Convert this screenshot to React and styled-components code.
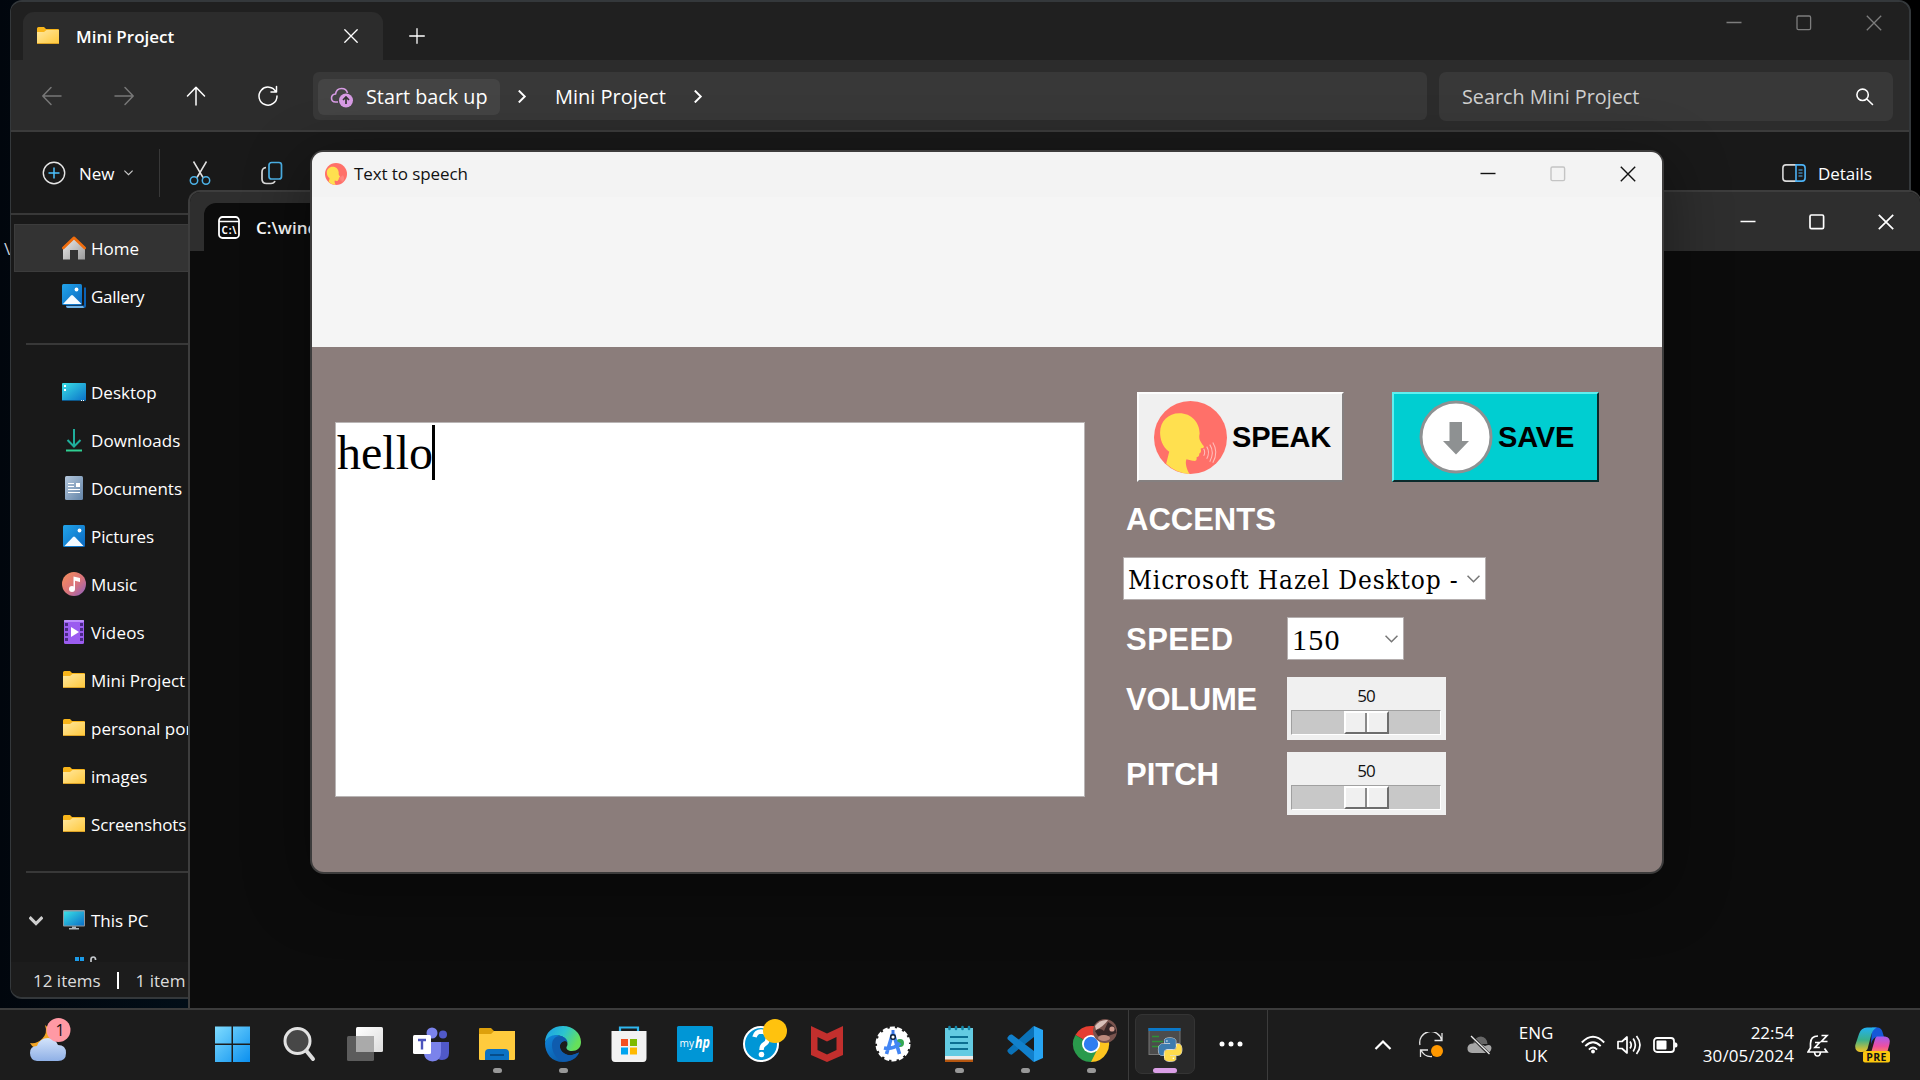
import React from "react";
import styled, { createGlobalStyle, css } from "styled-components";

const GlobalStyle = createGlobalStyle`
  *, *::before, *::after { box-sizing: border-box; }
  html, body { margin: 0; padding: 0; background: #000; }
  body { overflow: hidden; font-family: "Open Sans", "Noto Sans", sans-serif; font-size: 17px; line-height: 1; color: #fff; }
  svg { display: block; flex: none; }
`;

const Desktop = styled.main`
  position: relative;
  width: 1920px;
  height: 1080px;
  overflow: hidden;
  background: linear-gradient(90deg, #01060d 0, #020e18 190px, #000 600px);
`;

const DesktopLabel = styled.span`
  position: absolute;
  left: 4px;
  top: 240px;
  color: #c9d4e0;
`;

const Window = styled.section`
  position: absolute;
  display: flex;
  flex-direction: column;
  overflow: hidden;
  left: ${(p) => p.$x}px;
  top: ${(p) => p.$y}px;
  width: ${(p) => p.$w}px;
  height: ${(p) => p.$h}px;
`;

const Text = styled.span`
  white-space: nowrap;
  font-size: ${(p) => p.$size || 17}px;
  font-weight: ${(p) => p.$weight || 400};
  letter-spacing: ${(p) => p.$track || 0}px;
  color: ${(p) => p.$color || "inherit"};
`;

/* ---------- window controls ---------- */
const Controls = styled.div`
  display: flex;
  align-items: center;
  margin-left: auto;
  gap: ${(p) => p.$gap}px;
  padding-right: ${(p) => p.$right}px;
  color: ${(p) => p.$color};
`;

const WindowControls = ({ color, maxColor, gap, right, w = 1.4 }) => (
  <Controls $color={color} $gap={gap} $right={right}>
    <svg width="16" height="16" viewBox="0 0 16 16"><path d="M.5 7.5h15" stroke="currentColor" strokeWidth={w} /></svg>
    <svg width="16" height="16" viewBox="0 0 16 16"><rect x="1" y="1" width="13.6" height="13.6" rx="1.4" fill="none" stroke={maxColor || "currentColor"} strokeWidth={w} /></svg>
    <svg width="16" height="16" viewBox="0 0 16 16"><path d="M.8.8l14.4 14.4M15.2.8L.8 15.2" stroke="currentColor" strokeWidth={w} /></svg>
  </Controls>
);

/* ---------- file explorer ---------- */
const ExplorerWindow = styled(Window)`
  background: #191919;
  border: 2px solid #34383b;
  border-left-width: 1px;
  border-radius: 12px;
`;

const TabStrip = styled.header`
  display: flex;
  height: 58px;
  padding: 10px 0 0 12px;
  background: #202020;
`;

const ExplorerTab = styled.div`
  display: flex;
  align-items: center;
  width: 360px;
  height: 48px;
  padding: 0 25px 0 13px;
  background: #2c2c2c;
  border-radius: 11px 11px 0 0;
  svg:last-child { margin-left: auto; }
  span { margin-left: 16px; }
`;

const NewTab = styled.div`
  display: grid;
  place-items: center;
  width: 68px;
  height: 48px;
`;

const StripControls = styled.div`
  display: flex;
  margin: -10px 0 0 auto;
  height: 42px;
`;

const NavBar = styled.nav`
  display: flex;
  align-items: center;
  height: 72px;
  padding: 2px 16px 0 29px;
  background: #2c2c2c;
  border-bottom: 2px solid #3b3b3b;
`;

const NavIcons = styled.div`
  display: flex;
  gap: 48px;
  width: 273px;
`;

const Address = styled.div`
  display: flex;
  align-items: center;
  width: 1114px;
  height: 48px;
  padding: 1px 5px 0;
  border-radius: 6px;
  background: #383838;
  > svg { margin: 0 15px 0 15px; }
`;

const BackupChip = styled.div`
  display: flex;
  align-items: center;
  gap: 12px;
  width: 182px;
  height: 36px;
  padding: 1px 12px 0;
  border-radius: 6px;
  background: #444;
`;

const Crumb = styled.div`
  width: 121px;
  margin-left: 12px;
  padding-top: 1px;
`;

const SearchBox = styled.div`
  display: flex;
  align-items: center;
  justify-content: space-between;
  width: 454px;
  height: 49px;
  margin-left: 12px;
  padding: 1px 19px 0 23px;
  border-radius: 7px;
  background: #383838;
  color: #cfcfcf;
`;

const CommandBar = styled.div`
  display: flex;
  align-items: center;
  height: 83px;
  padding: 0 37px 0 31px;
  border-bottom: 2px solid #383838;
  span { padding-top: 2px; }
`;

const NewButton = styled.div`
  display: flex;
  align-items: center;
  width: 118px;
  height: 48px;
  gap: 13px;
  border-right: 1px solid #383838;
  svg:last-child { margin-left: -4px; }
`;

const CommandIcons = styled.div`
  display: flex;
  gap: 48px;
  margin-left: 28px;
`;

const DetailsButton = styled.div`
  display: flex;
  align-items: center;
  gap: 12px;
  margin-left: auto;
`;

const SideBar = styled.aside`
  width: 260px;
  height: 747px;
  padding: 9px 0 0 3px;
  overflow: hidden;
`;

const SideItem = styled.div`
  display: flex;
  align-items: center;
  height: 48px;
  padding-left: 12px;
  ${(p) => p.$active && css`
    background: #333;
    border: 1px solid #3c3c3c;
    padding-left: 11px;
  `}
`;

const Expander = styled.div`
  width: 21px;
  margin-right: 15px;
  padding-left: 3px;
`;

const SideIcon = styled.div`
  display: grid;
  place-items: center;
  width: 24px;
  height: 24px;
  margin-right: 5px;
  margin-left: ${(p) => (p.$nested ? 12 : 0)}px;
`;

const SideDivider = styled.div`
  height: 48px;
  margin-left: 12px;
  &::before { content: ""; display: block; height: 25px; border-bottom: 2px solid #383838; }
`;

const StatusBar = styled.footer`
  display: flex;
  align-items: center;
  height: 35px;
  padding: 2px 0 0 22px;
  background: #1c1c1c;
  color: #dcdcdc;
`;

const StatusMark = styled.i`
  width: 2px;
  height: 17px;
  margin: 0 17px 0 16px;
  background: #fff;
`;

/* ---------- terminal ---------- */
const TerminalWindow = styled(Window)`
  background: #0c0c0c;
  border: 2px solid #3d3d3d;
  border-right-width: 1px;
  border-bottom: 0;
  border-radius: 12px 12px 0 0;
`;

const TerminalBar = styled.header`
  display: flex;
  height: 59px;
  padding-left: 14px;
  background: #2e2e2e;
`;

const TerminalTab = styled.div`
  display: flex;
  align-items: center;
  gap: 16px;
  width: 360px;
  height: 48px;
  margin-top: 11px;
  padding-left: 14px;
  background: #0c0c0c;
  border-radius: 12px 12px 0 0;
`;

/* ---------- text to speech ---------- */
const SpeechWindow = styled(Window)`
  overflow: visible;
  border-radius: 12px;
  background: #8b7d7b;
  box-shadow: 0 0 0 2px #3d3c3c, 0 16px 60px 10px rgba(0, 0, 0, 0.32);
`;

const SpeechTitle = styled.header`
  display: flex;
  align-items: center;
  height: 45px;
  padding: 0 0 2px 13px;
  gap: 7px;
  color: #111;
  background: #f3f3f3;
  border-radius: 11px 11px 0 0;
`;

const TopFrame = styled.div`
  height: 150px;
  background: #f5f5f5;
`;

const SpeechBody = styled.div`
  display: flex;
  flex: 1;
  padding-left: 23px;
`;

const TextArea = styled.div`
  display: flex;
  align-items: flex-start;
  width: 750px;
  height: 375px;
  margin: 75px 38px 0 0;
  padding: 2px 1px;
  border: 1px solid #b9b5b5;
  background: #fff;
  color: #000;
  font: 48px/55px "Liberation Serif", serif;
`;

const Caret = styled.i`
  width: 3px;
  height: 55px;
  margin-left: -1px;
  background: #000;
`;

const Controller = styled.div`
  display: flex;
  flex-direction: column;
  padding-top: 45px;
`;

const ButtonRow = styled.div`
  display: flex;
  gap: 48px;
  padding-left: 14px;
`;

const TkButton = styled.div`
  display: flex;
  align-items: center;
  gap: 5px;
  width: 207px;
  height: 90px;
  padding-left: ${(p) => p.$left}px;
  color: #000;
  font: 700 29px/1 "Liberation Sans", sans-serif;
  letter-spacing: -0.2px;
  background: ${(p) => p.$bg};
  border: 2px solid;
  border-color: ${(p) => p.$edge};
`;

const FieldLabel = styled.div`
  width: 164px;
  padding-left: 3px;
  color: #fff;
  font: 700 31px/${(p) => p.$line || 45}px "Liberation Sans", sans-serif;
  letter-spacing: ${(p) => p.$track || 0}px;
`;

const Field = styled.div`
  display: flex;
  align-items: flex-start;
  height: ${(p) => p.$h}px;
  margin-top: ${(p) => p.$gap}px;
`;

const Combo = styled.div`
  display: flex;
  align-items: center;
  justify-content: space-between;
  width: ${(p) => p.$w}px;
  height: 43px;
  padding: 0 5px 0 4px;
  border: 1px solid #b4aeae;
  background: #fff;
  color: #000;
`;

const ComboText = styled.span`
  padding-top: 2px;
  white-space: nowrap;
  font: ${(p) => p.$font};
  letter-spacing: ${(p) => p.$track}px;
`;

const Scale = styled.div`
  width: 159px;
  height: 63px;
  padding: 10px 5px 0 4px;
  background: #f0f0f0;
  color: #111;
  text-align: center;
  font-size: 17px;
  letter-spacing: -1px;
`;

const Trough = styled.div`
  display: flex;
  justify-content: center;
  height: 25px;
  margin-top: 6px;
  border: 1px solid;
  border-color: #a0a0a0 #fff #fff #a0a0a0;
  background: #c8c8c8;
`;

const Thumb = styled.div`
  display: flex;
  width: 45px;
  height: 23px;
  border: 2px solid;
  border-color: #fff #6d6d6d #6d6d6d #fff;
  background: #f0f0f0;
  &::before { content: ""; width: 21px; border-right: 2px solid #8a8a8a; }
  &::after { content: ""; width: 2px; background: #fff; }
`;

/* ---------- taskbar ---------- */
const TaskBar = styled.footer`
  position: absolute;
  left: 0;
  right: 0;
  bottom: 0;
  display: flex;
  height: 72px;
  background: #1c1c1c;
  border-top: 2px solid #3c3c3c;
`;

const Widgets = styled.div`
  width: 200px;
  padding: 8px 0 0 28px;
`;

const TaskCell = styled.div`
  display: flex;
  flex-direction: column;
  align-items: center;
  width: 66px;
  padding-top: 7px;
  svg { overflow: visible; }
`;

const RunMark = styled.i`
  width: 9px;
  height: 5px;
  margin-top: 3px;
  border-radius: 3px;
  background: #989898;
`;

const ActiveGroup = styled.div`
  display: flex;
  width: 140px;
  margin-left: 4px;
  padding: 4px 0 0 6px;
  border: solid #3c3c3c;
  border-width: 0 1px;
`;

const ActiveTask = styled.div`
  display: flex;
  flex-direction: column;
  align-items: center;
  width: 60px;
  height: 60px;
  border: 1px solid #343434;
  border-radius: 7px;
  background: #292929;
  i { width: 24px; height: 5px; margin-top: 5px; border-radius: 3px; background: #da9fe6; }
`;

const Overflow = styled.div`
  display: grid;
  place-items: center;
  width: 72px;
  height: 60px;
`;

const Tray = styled.div`
  display: flex;
  align-items: center;
  margin-left: 106px;
`;

const Slot = styled.div`
  margin-left: ${(p) => p.$gap || 0}px;
`;

const TwoLines = styled.div`
  display: flex;
  flex-direction: column;
  align-items: ${(p) => p.$align};
  width: ${(p) => p.$w}px;
  gap: 6px;
  padding-bottom: 2px;
  margin-left: ${(p) => p.$gap}px;
`;

/* ---------- icon drawings ---------- */
const Folder = ({ size = 24 }) => (
  <svg width={size} height={size} viewBox="0 0 24 24">
    <defs><linearGradient id="fold" x1="0" y1="0" x2="1" y2="1"><stop offset="0" stopColor="#ffe8a0" /><stop offset="1" stopColor="#ffc83a" /></linearGradient></defs>
    <path d="M1 4.5Q1 3 2.500 3H8L10 5H22Q23 5 23 6V19H1Z" fill="#f8b51a" />
    <path d="M1 8H8L10.500 6H23V19.500Q23 20 22 20H2Q1 20 1 19Z" fill="url(#fold)" />
    <path d="M1 19.500H23" stroke="#dda327" />
  </svg>
);

const Chevron = ({ dir = "right", size = 12, w = 1.8, color = "currentColor" }) => {
  const turn = { right: 0, down: 90, left: 180, up: -90 }[dir];
  return (
    <svg width={size} height={size} viewBox="0 0 12 12">
      <path d="M3.500 0.500L9 6L3.500 11.500" transform={`rotate(${turn} 6 6)`} fill="none" stroke={color} strokeWidth={w} />
    </svg>
  );
};

const Line = ({ d, size = 24, w = 1.7, color = "#fff", box = 24 }) => (
  <svg width={size} height={size} viewBox={`0 0 ${box} ${box}`} fill="none" stroke={color} strokeWidth={w} strokeLinecap="round" strokeLinejoin="round"><path d={d} /></svg>
);

const Picture = ({ stacked }) => (
  <svg width="24" height="24" viewBox="0 0 24 24">
    <defs><linearGradient id="pic" x1="0" y1="0" x2="1" y2="1"><stop stopColor="#22a4ea" /><stop offset="1" stopColor="#0a68c0" /></linearGradient></defs>
    {stacked && <path d="M4 21.500h18v-18h2V22q0 2-2 2H5z" fill="#0b62b5" />}
    {stacked && <path d="M4 22H21L22 24H6Q4 24 4 22Z" fill="#6fb3e8" />}
    <rect x={stacked ? 0 : 1} y={stacked ? 0 : 1} width={stacked ? 20 : 22} height={stacked ? 21 : 22} rx="1.500" fill="url(#pic)" />
    <path d={stacked ? "M1 20L9 11.500Q10 10.500 11 11.500L19.500 20Z" : "M2.500 22L11 13Q12 12 13 13L21.500 22Z"} fill="#f4faff" />
    <circle cx={stacked ? 14.500 : 17.500} cy={stacked ? 5.500 : 6.500} r="1.900" fill="#fff" />
  </svg>
);

const Home = () => (
  <svg width="24" height="24" viewBox="0 0 24 24">
    <defs><linearGradient id="hm" x1="0" y1="0" x2="1" y2="1"><stop stopColor="#eee" /><stop offset="1" stopColor="#9a9a9a" /></linearGradient></defs>
    <path d="M1 11L12 1.500L23 11V23.500H16V14H8V23.500H1Z" fill="url(#hm)" />
    <path d="M1.300 12L12 1.800L22.700 12" fill="none" stroke="#ef6c0c" strokeWidth="2.600" strokeLinecap="round" strokeLinejoin="round" />
  </svg>
);

const DesktopIcon = () => (
  <svg width="24" height="24" viewBox="0 0 24 24">
    <defs><linearGradient id="dk" x1="0" y1="0" x2="1" y2="1"><stop stopColor="#3ae0e6" /><stop offset="1" stopColor="#0a6fc8" /></linearGradient></defs>
    <rect y="3" width="24" height="18" rx="1" fill="url(#dk)" /><path d="M0 20.500h24" stroke="#0c5688" />
    <path d="M2 5h2v2H2zM2 9h2v2H2zM19 20h1v1h-1zM21 20h1v1h-1z" fill="#fff" />
  </svg>
);

const Downloads = () => (
  <svg width="24" height="24" viewBox="0 0 24 24" fill="none" strokeWidth="2">
    <path d="M12 1V18.500M5.500 12L12 18.500L18.500 12" stroke="#1fae9c" /><path d="M4 22.500H20" stroke="#2fcf92" />
  </svg>
);

const Documents = () => (
  <svg width="24" height="24" viewBox="0 0 24 24">
    <defs><linearGradient id="dc" x1="0" y1="0" x2="1" y2="1"><stop stopColor="#b4c7dc" /><stop offset="1" stopColor="#6384a8" /></linearGradient></defs>
    <rect x="3" width="18" height="24" rx="1.500" fill="url(#dc)" />
    <path d="M6 7.500h6M6 10.500h6M6 13.500h12M6 16.500h12" stroke="#fff" strokeWidth="1" /><path d="M14 7h4v4h-4z" fill="#fff" />
  </svg>
);

const Music = () => (
  <svg width="24" height="24" viewBox="0 0 24 24">
    <defs><linearGradient id="mu" x1="0" y1="0" x2="1" y2="1"><stop stopColor="#f8905a" /><stop offset=".55" stopColor="#d8737c" /><stop offset="1" stopColor="#8a5fc4" /></linearGradient></defs>
    <circle cx="12" cy="12" r="12" fill="url(#mu)" /><circle cx="10" cy="17" r="3" fill="#fff" /><path d="M11.500 17V4.500L18 6V10L13 8.700V17Z" fill="#fff" />
  </svg>
);

const Videos = () => (
  <svg width="24" height="24" viewBox="0 0 24 24">
    <rect x="2" width="20" height="24" rx="1.500" fill="#9b5cf0" /><path d="M2 1h20" stroke="#c9a2ff" strokeWidth="1.500" />
    <path d="M3 3h3v3H3zM3 8h3v3H3zM3 13h3v3H3zM3 18h3v3H3zM18 3h3v3h-3zM18 8h3v3h-3zM18 13h3v3h-3zM18 18h3v3h-3z" fill="#4b2a86" />
    <path d="M9 7L17 12L9 17Z" fill="#fff" />
  </svg>
);

const Computer = () => (
  <svg width="24" height="24" viewBox="0 0 24 24">
    <rect x="1" y="2" width="22" height="16.500" rx="1" fill="#8d979f" /><rect x="2" y="3.500" width="20" height="14" fill="url(#dk)" />
    <path d="M10 18.500h4v1.500h3V21.500H7V20h3z" fill="#aeb6bc" />
  </svg>
);

const SystemDrive = () => (
  <svg width="24" height="24" viewBox="0 0 24 24">
    <path d="M1 1h4v4H1zM6 1h4v4H6zM1 6h4v4H1zM6 6h4v4H6z" fill="#1b9be8" />
    <path d="M17 10V3.500Q17 1 19.300 1Q21.600 1 21.600 4" fill="none" stroke="#c4c8cc" strokeWidth="1.700" />
    <rect x="0" y="12" width="24" height="8" rx="1" fill="#b8bcc0" />
  </svg>
);

const SpeakHead = ({ size }) => (
  <svg width={size} height={size} viewBox="0 0 72 72">
    <circle cx="36" cy="36" r="36" fill="#ff7069" />
    <path d="M12 62L15 50C8 45 6 37 6 31C6 20 14 12 25 12C37 12 45 21 45 32C44 37 45 39 49 44.500C50 46.500 48 46.500 46 47C47 50 46 51 44.500 52C45 54 44 55 42 55.500C42.500 59 41 59.500 38 59L32 57.500C30.500 61 32 67 35 72A36 36 0 0 1 12 62Z" fill="#ffe04f" />
    <path d="M49 47Q51 50.500 49 54M52 45Q55.500 50.500 52 57M55 43Q60 50.500 55 60M58 41Q64 50.500 58 61" fill="none" stroke="#ffc0bd" strokeWidth="1" />
  </svg>
);

const SaveArrow = () => (
  <svg width="74" height="74" viewBox="0 0 74 74">
    <circle cx="37" cy="37" r="35" fill="#fff" stroke="#8e9192" strokeWidth="3" />
    <path d="M30.500 22H43V41H50L37 54.500L24 41H30.500Z" fill="#8e9192" />
  </svg>
);

const Weather = () => (
  <svg width="46" height="46" viewBox="0 0 46 46">
    <defs><linearGradient id="cl" x1="0" y1="0" x2="0" y2="1"><stop stopColor="#d4e4fb" /><stop offset="1" stopColor="#8fb0e6" /></linearGradient></defs>
    <path d="M17 7Q20 15 14 21Q9 26 2 25Q5 31 13 31Q22 30 24 20Q23 11 17 7Z" fill="#f3a625" />
    <path d="M9 43Q2 42 2 35Q2 28 9 28Q12 20 20 20Q27 20 30 27Q38 27 38 35Q38 43 30 43Z" fill="url(#cl)" />
    <circle cx="30.500" cy="12" r="12" fill="#ff99a4" />
    <text x="32" y="18" textAnchor="middle" fontSize="16" fill="#111">1</text>
  </svg>
);

const Cell = ({ children, open }) => (
  <TaskCell>
    <svg width="48" height="48" viewBox="0 0 48 48">{children}</svg>
    {open && <RunMark />}
  </TaskCell>
);

const TaskIcons = () => (
  <>
    <Cell>
      <defs><linearGradient id="wn" x1="0" y1="0" x2="1" y2="1"><stop stopColor="#7fdcff" /><stop offset="1" stopColor="#0a8fef" /></linearGradient></defs>
      <path d="M8 10h16.500v17H8zM26 10H43v17H26zM8 28.500h16.500v17H8zM26 28.500H43v17H26z" transform="translate(-2 -.5)" fill="url(#wn)" />
    </Cell>
    <Cell>
      <circle cx="22.500" cy="24" r="12.500" fill="#474747" stroke="#e2e2e2" strokeWidth="3" />
      <path d="M31.500 34L38 42" stroke="#dcdcdc" strokeWidth="4" strokeLinecap="round" />
    </Cell>
    <Cell>
      <defs><linearGradient id="tv" x1="0" y1="0" x2="1" y2="1"><stop stopColor="#fff" /><stop offset="1" stopColor="#dcdcdc" /></linearGradient></defs>
      <rect x="15" y="10" width="27" height="25" rx="1.500" fill="url(#tv)" />
      <rect x="6" y="19" width="27" height="25" rx="1.500" fill="#5c5c5c" /><path d="M15 19H33V35H15Z" fill="#aaa" />
    </Cell>
    <Cell>
      <circle cx="25" cy="16" r="5.500" fill="#7b83eb" /><circle cx="36" cy="17.500" r="4" fill="#5059c9" />
      <path d="M32 25H42V36Q42 43 35 43Q30 43 29 38Z" fill="#5059c9" /><path d="M17 25H34V35Q34 44 25.500 44.500Q18 44 17 37Z" fill="#7b83eb" />
      <rect x="6" y="18" width="18" height="19" rx="1.500" fill="#fff" /><path d="M11 23H19M15 23V32.500" stroke="#4b53bc" strokeWidth="2.400" />
    </Cell>
    <Cell open>
      <path d="M6 12Q6 11 7 11H18L21 14H41Q42 14 42 15V42H6Z" fill="#dda00c" />
      <path d="M6 17H18L21 14H42V42Q42 43 41 43H7Q6 43 6 42Z" fill="#ffcb3d" />
      <path d="M12 43V36Q12 32 16 32H32Q36 32 36 36V43Z" fill="#0c72c4" /><path d="M17 38H31" stroke="#06457c" strokeWidth="1.600" />
    </Cell>
    <Cell open>
      <defs>
        <linearGradient id="eg" x1="0" y1="0" x2="1" y2=".4"><stop stopColor="#1a9be8" /><stop offset=".55" stopColor="#2cc4cf" /><stop offset="1" stopColor="#66e05a" /></linearGradient>
        <linearGradient id="eb" x1="0" y1="0" x2="1" y2="1"><stop stopColor="#0f86dc" /><stop offset="1" stopColor="#0b4a94" /></linearGradient>
      </defs>
      <path d="M6 26C6 15 14 9 24 9C34 9 42 16 42 25C42 31 38 34 33 34C29 34 27 32 27.500 30C30 27 28 20 20 18.500C12 18 7 22 6 26Z" fill="url(#eg)" />
      <path d="M6 26C8 20 14 17 20 18.500C25 19.500 28 22 28.500 25C27 23 22 24 21 28C20 34 26 39 33 38C36 37.500 39 36 40 35.500C38 41 32 45 24 45C13 45 6 37 6 26Z" fill="url(#eb)" />
      <path d="M13 28C13 22 17 19 21 19C27 20 28 24 28.500 25C26 23 22 24 21 28C20 34 26 39 33 38L40 35.500C38 41 31 45 25 44.500C18 43 13 36 13 28Z" fill="#0f5cae" />
    </Cell>
    <Cell>
      <path d="M15 15V10.500H33V15" fill="none" stroke="#2fb6ee" strokeWidth="2.200" />
      <path d="M6.500 14H41.500V41Q41.500 45 38 45H10Q6.500 45 6.500 41Z" fill="#f2f2f2" />
      <path d="M16 22h7v7h-7z" fill="#f25022" /><path d="M25 22h7v7h-7z" fill="#7fba00" /><path d="M16 30.500h7v7h-7z" fill="#00a4ef" /><path d="M25 30.500h7v7h-7z" fill="#ffb900" />
    </Cell>
    <Cell>
      <rect x="6" y="9" width="36" height="36" rx="1.500" fill="#0096d6" />
      <text x="8.500" y="30" fontSize="11.500" fill="#fff" textLength="14.500" lengthAdjust="spacingAndGlyphs">my</text>
      <text x="24" y="31" fontSize="16" fontStyle="italic" fontWeight="700" fill="#fff" textLength="15" lengthAdjust="spacingAndGlyphs">hp</text>
    </Cell>
    <Cell>
      <circle cx="24" cy="27" r="17" fill="#0096d6" stroke="#fff" strokeWidth="2" />
      <path d="M17.500 20Q19 14.500 24 14.500Q31 15 31 21Q31 25 27 27.500Q24.500 29 24.500 33" fill="none" stroke="#fff" strokeWidth="4.500" />
      <circle cx="24.500" cy="37.500" r="2.800" fill="#fff" /><circle cx="38" cy="14" r="12" fill="#ffc20e" />
    </Cell>
    <Cell><path d="M8 9L24 16.500L40 9V38L24 45L8 38ZM14.500 20V33L24 37.500L33.500 33V20L24 24.500Z" fill="#c22f2d" fillRule="evenodd" /></Cell>
    <Cell>
      <circle cx="24" cy="27" r="16" fill="#fff" stroke="#fff" strokeWidth="3" strokeDasharray="5 2.180" />
      <circle cx="31" cy="26" r="4" fill="#35a853" />
      <path d="M23.500 17L17.500 37M24.500 17L30.500 37M15 31Q24 33 31 26" fill="none" stroke="#4285f4" strokeWidth="3.600" />
      <path d="M24 13V17" stroke="#3a77e6" strokeWidth="3" /><circle cx="24" cy="20" r="2.300" fill="#fff" stroke="#10233a" strokeWidth="1.500" />
    </Cell>
    <Cell open>
      <rect x="10" y="11" width="28" height="34" rx="1" fill="#ececec" /><path d="M10 42.500H38V45H10Z" fill="#b5560f" />
      <path d="M10 12Q10 11 11 11H37Q38 11 38 12V39H10Z" fill="#63cbe2" /><path d="M15 20H33M15 26H33M15 32H33" stroke="#0b6f92" strokeWidth="2" />
      <path d="M14.500 10V12M21 10V12M27.500 10V12M34 10V12" stroke="#1387a9" strokeWidth="2.600" strokeLinecap="round" />
    </Cell>
    <Cell open>
      <path d="M33 9L42 13V41L33 45Z" fill="#27a4f2" /><path d="M33 9V20L11 37.500Q9.500 38 8 36.500L6.500 34.500Q6 33 7.500 32L32 9.500Z" fill="#0a72b8" />
      <path d="M33 45V34L11 17.500Q9.500 17 8 18.500L6.500 20.500Q6 22 7.500 23L32 44.500Z" fill="#1180cc" />
    </Cell>
    <Cell open>
      <path d="M24 27L8.400 18A18 18 0 0 1 39.600 18Z" fill="#e53e31" /><path d="M24 27L39.600 18A18 18 0 0 1 24 45Z" fill="#fdc41f" />
      <path d="M24 27L31 31L24 45A18 18 0 0 1 8.400 18Z" fill="#2a9a4c" /><path d="M24 18H39.600A18 18 0 0 0 24 9Z" fill="#e53e31" />
      <circle cx="24" cy="27" r="9" fill="#fff" /><circle cx="24" cy="27" r="7.200" fill="#2f7df0" />
      <circle cx="38" cy="14" r="12" fill="#7a544e" /><path d="M28 9Q33 2 41 3Q37 9 29 13Z" fill="#d9c0ba" /><path d="M28 14Q33 10 37 14L41 5Q49 9 49.500 16L41 19L36 18L31 19Z" fill="#352526" /><circle cx="45" cy="12" r="2.600" fill="#cf9a8d" /><ellipse cx="37" cy="21" rx="6" ry="3" fill="#bd8a7d" />
    </Cell>
  </>
);

const PY = "M14.25.18l.9.2.73.26.59.3.45.32.34.34.25.34.16.33.1.3.04.26.02.2-.01.13V8.5l-.05.63-.13.55-.21.46-.26.38-.3.31-.33.25-.35.19-.35.14-.33.1-.3.07-.26.04-.21.02H8.77l-.69.05-.59.14-.5.22-.41.27-.33.32-.27.35-.2.36-.15.37-.1.35-.07.32-.04.27-.02.21v3.06H3.17l-.21-.03-.28-.07-.32-.12-.35-.18-.36-.26-.36-.36-.35-.46-.32-.59-.28-.73-.21-.88-.14-1.05-.05-1.23.06-1.22.16-1.04.24-.87.32-.71.36-.57.4-.44.42-.33.42-.24.4-.16.36-.1.32-.05.24-.01h.16l.06.01h8.16v-.83H6.18l-.01-2.75-.02-.37.05-.34.11-.31.17-.28.25-.26.31-.23.38-.2.44-.18.51-.15.58-.12.64-.1.71-.06.77-.04.84-.02 1.27.05z";

const PythonConsole = () => (
  <svg width="48" height="48" viewBox="0 0 48 48">
    <rect x="8" y="13.500" width="31" height="26" fill="#4c4c4c" stroke="#777" /><path d="M7.500 13H39.500V16H7.500Z" fill="#0a78c8" />
    <path d="M11 21.500H18M11 26.500H22M11 31.500H18" stroke="#2e8f35" strokeWidth="1.400" />
    <g transform="translate(17.500 23) scale(.97)" stroke="#fff" strokeWidth="1" paintOrder="stroke">
      <path d={PY} fill="#3d7bae" /><path d={PY} transform="rotate(180 12 12)" fill="#ffdb4c" />
      <circle cx="8.700" cy="3" r=".8" fill="#fff" stroke="none" /><circle cx="15.300" cy="21" r=".8" fill="#fff" stroke="none" />
    </g>
  </svg>
);

const Copilot = () => (
  <svg width="36" height="36" viewBox="0 0 36 36">
    <defs>
      <linearGradient id="ca" x1="0" y1="0" x2="0" y2="1"><stop stopColor="#22b1f2" /><stop offset=".5" stopColor="#39b08c" /><stop offset="1" stopColor="#f6c421" /></linearGradient>
      <linearGradient id="cb" x1="0" y1="0" x2="0" y2="1"><stop stopColor="#a65bf0" /><stop offset=".6" stopColor="#ee4fa0" /><stop offset="1" stopColor="#ff8a54" /></linearGradient>
    </defs>
    <path d="M17 .5H23Q26.500 1 27.500 5L29 10H22Q18 10 16 17Z" fill="#1658d8" />
    <path d="M12 .5H22Q18 2 16.500 7L12.500 22Q11 25 7 25H5Q-.5 24 .3 18L4 7Q6 .5 12 .5Z" fill="url(#ca)" />
    <path d="M22 9.500H30Q36 10 34.500 17L32 26H16L20 12Q20.500 10 22 9.500Z" fill="url(#cb)" />
    <rect x="8" y="24" width="27" height="11.500" rx="2" fill="#fbc70f" />
    <text x="21.500" y="33.600" textAnchor="middle" fontSize="10.500" fontWeight="700" fill="#141414" letterSpacing=".3">PRE</text>
  </svg>
);

const SIDE = [
  { label: "Home", icon: <Home />, active: true },
  { label: "Gallery", icon: <Picture stacked />, track: -0.3 },
  null,
  { label: "Desktop", icon: <DesktopIcon /> },
  { label: "Downloads", icon: <Downloads />, track: 0.1 },
  { label: "Documents", icon: <Documents /> },
  { label: "Pictures", icon: <Picture />, track: -0.1 },
  { label: "Music", icon: <Music /> },
  { label: "Videos", icon: <Videos />, track: 0.2 },
  { label: "Mini Project", icon: <Folder /> },
  { label: "personal portfolio", icon: <Folder /> },
  { label: "images", icon: <Folder /> },
  { label: "Screenshots", icon: <Folder />, track: -0.15 },
  null,
  { label: "This PC", icon: <Computer />, expand: true },
  { label: "", icon: <SystemDrive />, nested: true },
];

const Explorer = () => (
  <ExplorerWindow $x={10} $y={0} $w={1901} $h={999}>
    <TabStrip>
      <ExplorerTab>
        <Folder />
        <Text $weight={600}>Mini Project</Text>
        <Line size={14} box={14} w={1.3} d="M.8.8L13.200 13.200M13.200.8L.8 13.200" />
      </ExplorerTab>
      <NewTab><Line size={16} box={16} w={1.3} d="M8 .7V15.300M.7 8H15.300" /></NewTab>
      <StripControls><WindowControls color="#7d7d7d" gap={54} right={27} w={1.3} /></StripControls>
    </TabStrip>
    <NavBar>
      <NavIcons>
        <Line color="#777" w={1.5} d="M21 12H3M11 3.500L2.800 12L11 20.500" />
        <Line color="#777" w={1.5} d="M3 12H21M13 3.500L21.200 12L13 20.500" />
        <Line w={1.5} d="M12 21V3.500M3.500 12L12 3.200L20.500 12" />
        <Line w={1.5} d="M20 8A9 9 0 1 0 21 12M20.500 2.500V8H15" />
      </NavIcons>
      <Address>
        <BackupChip>
          <svg width="24" height="24" viewBox="0 0 24 24">
            <path d="M8 17H5.500Q1.500 17 1.500 13Q1.500 9.500 5.500 9Q6.500 3.500 11.500 3.500Q16.500 3.500 17.500 8" fill="none" stroke="#d79be4" strokeWidth="1.600" />
            <circle cx="16" cy="15.500" r="7" fill="#d79be4" /><path d="M16 19V12.500M13 15L16 12L19 15" fill="none" stroke="#333" strokeWidth="1.700" />
          </svg>
          <Text $size={19.8}>Start back up</Text>
        </BackupChip>
        <Chevron size={13} />
        <Crumb><Text $size={20}>Mini Project</Text></Crumb>
        <Chevron size={13} />
      </Address>
      <SearchBox>
        <Text $size={19.8}>Search Mini Project</Text>
        <Line size={18} box={18} w={1.6} d="M12.300 6.800A5.700 5.700 0 1 1 .9 6.800A5.700 5.700 0 1 1 12.300 6.800M10.800 11L16.500 16.500" />
      </SearchBox>
    </NavBar>
    <CommandBar>
      <NewButton>
        <svg width="24" height="24" viewBox="0 0 24 24" fill="none"><circle cx="12" cy="12" r="10.700" stroke="#e6e6e6" strokeWidth="1.400" /><path d="M12 6.500V17.500M6.500 12H17.500" stroke="#4cc2ff" strokeWidth="1.500" /></svg>
        <Text>New</Text>
        <Chevron dir="down" size={9} w={1.5} color="#ccc" />
      </NewButton>
      <CommandIcons>
        <svg width="24" height="24" viewBox="0 0 24 24" fill="none" strokeWidth="1.500"><path d="M5.500 .5L15 16.500M18.500 .5L9 16.500" stroke="#e0e0e0" /><circle cx="6" cy="19.500" r="3.700" stroke="#4cb2e8" /><circle cx="18" cy="19.500" r="3.700" stroke="#4cb2e8" /></svg>
        <svg width="24" height="24" viewBox="0 0 24 24" fill="none" strokeWidth="1.700"><path d="M6 6.500Q2 7 2 11V18Q2 22.500 6.500 22.500H11Q14 22.500 15 20" stroke="#ddd" /><rect x="9" y="1.500" width="12.500" height="16.500" rx="2.500" stroke="#4cb2e8" /></svg>
      </CommandIcons>
      <DetailsButton>
        <svg width="24" height="18" viewBox="0 0 24 18" fill="none" strokeWidth="1.600"><path d="M14 .9H4Q.9 .9 .9 4V14Q.9 17.100 4 17.100H14" stroke="#d8d8d8" /><path d="M14 .9H20Q23.100 .9 23.100 4V14Q23.100 17.100 20 17.100H14Z" stroke="#4cb2f5" /><path d="M16.500 6H20.500M16.500 9H20.500M16.500 12H20.500" stroke="#4cb2f5" strokeWidth="1.200" /></svg>
        <Text>Details</Text>
      </DetailsButton>
    </CommandBar>
    <SideBar>
      {SIDE.map((s, i) => s ? (
        <SideItem key={i} $active={s.active}>
          <Expander>{s.expand && <Chevron dir="down" size={14} w={2.6} color="#cfcfcf" />}</Expander>
          <SideIcon $nested={s.nested}>{s.icon}</SideIcon>
          {s.label && <Text $track={s.track}>{s.label}</Text>}
        </SideItem>
      ) : <SideDivider key={i} />)}
    </SideBar>
    <StatusBar><Text>12 items</Text><StatusMark /><Text>1 item selected</Text></StatusBar>
  </ExplorerWindow>
);

const Terminal = () => (
  <TerminalWindow $x={188} $y={190} $w={1733} $h={818}>
    <TerminalBar>
      <TerminalTab>
        <svg width="22" height="23" viewBox="0 0 22 23"><rect x="1" y="1" width="20" height="21" rx="3.500" fill="none" stroke="#fff" strokeWidth="1.800" /><path d="M1 5.500H21" stroke="#fff" strokeWidth="1.500" /><text x="11" y="17.500" textAnchor="middle" fontSize="10" fontWeight="700" fill="#fff" textLength="15">C:\</text></svg>
        <Text $weight={600}>C:\windows\py.exe</Text>
      </TerminalTab>
      <WindowControls color="#fff" gap={53} right={26} w={1.7} />
    </TerminalBar>
  </TerminalWindow>
);

const ScaleField = ({ label, gap, track }) => (
  <Field $gap={gap} $h={63}>
    <FieldLabel $track={track}>{label}</FieldLabel>
    <Scale>50<Trough><Thumb /></Trough></Scale>
  </Field>
);

const Speech = () => (
  <SpeechWindow $x={312} $y={152} $w={1350} $h={720}>
    <SpeechTitle>
      <SpeakHead size={22} />
      <Text $track={-0.1}>Text to speech</Text>
      <WindowControls color="#111" maxColor="#c4c4c4" gap={54} right={26} />
    </SpeechTitle>
    <TopFrame />
    <SpeechBody>
      <TextArea>hello<Caret /></TextArea>
      <Controller>
        <ButtonRow>
          <TkButton $left={15} $bg="#f0f0f0" $edge="#fdfdfd #858080 #858080 #fdfdfd"><SpeakHead size={73} />SPEAK</TkButton>
          <TkButton $left={25} $bg="#00ced1" $edge="#5ef0f0 #0a2a2b #0a2a2b #5ef0f0"><SaveArrow />SAVE</TkButton>
        </ButtonRow>
        <FieldLabel $line={75}>ACCENTS</FieldLabel>
        <Combo $w={363}>
          <ComboText $font={'26px/1 "DejaVu Serif Condensed", "DejaVu Serif", serif'} $track={0.85}>Microsoft Hazel Desktop -</ComboText>
          <Chevron dir="down" size={13} w={1.4} color="#777" />
        </Combo>
        <Field $gap={17} $h={43}>
          <FieldLabel $track={0.5}>SPEED</FieldLabel>
          <Combo $w={117}><ComboText $font={'30px/1 "Liberation Serif", serif'} $track={1.3}>150</ComboText><Chevron dir="down" size={13} w={1.4} color="#777" /></Combo>
        </Field>
        <ScaleField label="VOLUME" gap={17} track={-0.3} />
        <ScaleField label="PITCH" gap={12} />
      </Controller>
    </SpeechBody>
  </SpeechWindow>
);

const Task = () => (
  <TaskBar>
    <Widgets><Weather /></Widgets>
    <TaskIcons />
    <ActiveGroup>
      <ActiveTask><PythonConsole /><i /></ActiveTask>
      <Overflow><svg width="24" height="6" viewBox="0 0 24 6" fill="#fff"><circle cx="3" cy="3" r="2.500" /><circle cx="12" cy="3" r="2.500" /><circle cx="21" cy="3" r="2.500" /></svg></Overflow>
    </ActiveGroup>
    <Tray>
      <Slot><svg width="18" height="12" viewBox="0 0 18 12"><path d="M1.500 10L9 2.500L16.500 10" fill="none" stroke="#fff" strokeWidth="2.200" /></svg></Slot>
      <Slot $gap={27}><svg width="24" height="26" viewBox="0 0 24 26" fill="none"><path d="M1 13A11 11 0 0 1 22.500 8M23 1V8.500H15.500M1.500 25V18H9M2 18A11 11 0 0 0 13 24.500" stroke="#e4e4e4" strokeWidth="1.300" /><circle cx="18" cy="19" r="6" fill="#ff9800" /></svg></Slot>
      <Slot $gap={24}><svg width="25" height="20" viewBox="0 0 25 20"><path d="M6 9Q8 1.500 14 1.500Q20 2 20.500 9Z" fill="#666" /><path d="M5 18Q0 17.500 .5 12.500Q1.500 8 7 8.500Q10 6 14 9L18 11Q24 8 24.500 13Q24 18 19 18Z" fill="#a6a6a6" /><path d="M4 1L22.500 19.500" stroke="#1c1c1c" strokeWidth="3" /><path d="M4 1L22.500 19" stroke="#eee" strokeWidth="1.300" /></svg></Slot>
      <TwoLines $align="center" $w={50} $gap={19}><Text>ENG</Text><Text>UK</Text></TwoLines>
      <Slot $gap={20}><svg width="24" height="20" viewBox="0 0 24 20" fill="none" stroke="#fff" strokeWidth="1.900"><path d="M.8 7.500Q12-4 23.200 7.500M4.300 11.200Q12 3.500 19.700 11.200M7.900 14.600Q12 10.500 16.100 14.600" /><circle cx="12" cy="16.500" r="1.900" fill="#fff" stroke="none" /></svg></Slot>
      <Slot $gap={12}><svg width="25" height="20" viewBox="0 0 25 20" fill="none" stroke="#fff" strokeWidth="1.700"><path d="M1 6.500H5L10 2V18L5 13.500H1Z" strokeLinejoin="round" /><path d="M13 6.500Q15.500 10 13 13.500M16.200 3.500Q20.500 10 16.200 16.500M19.500 1Q26.500 10 19.500 19" /></svg></Slot>
      <Slot $gap={11}><svg width="25" height="16" viewBox="0 0 25 16"><rect x="1" y="1" width="20" height="14" rx="3" fill="none" stroke="#fff" strokeWidth="1.800" /><rect x="3.500" y="3.500" width="10" height="9" rx="1" fill="#fff" /><path d="M21.500 5.500H23Q24.500 6 24.500 8Q24.500 10 23 10.500H21.500Z" fill="#fff" /></svg></Slot>
      <TwoLines $align="flex-end" $w={96} $gap={20}><Text>22:54</Text><Text $track={0.1}>30/05/2024</Text></TwoLines>
      <Slot $gap={13}><svg width="22" height="23" viewBox="0 0 22 23" fill="none" stroke="#fff" strokeWidth="1.700"><path d="M11 2Q3.500 2 3.500 9.500V14L1 18H20L17.500 14.500M7.500 18.500Q8 22 10.500 22Q13 22 13.500 18.500" /><path d="M14.500 1.500H20L14.500 7.500H20.500M8 8.500H12.500L8 13.500H12.800" /></svg></Slot>
      <Slot $gap={26}><Copilot /></Slot>
    </Tray>
  </TaskBar>
);

export default function App() {
  return (
    <Desktop>
      <GlobalStyle />
      <DesktopLabel>\</DesktopLabel>
      <Explorer />
      <Terminal />
      <Speech />
      <Task />
    </Desktop>
  );
}
